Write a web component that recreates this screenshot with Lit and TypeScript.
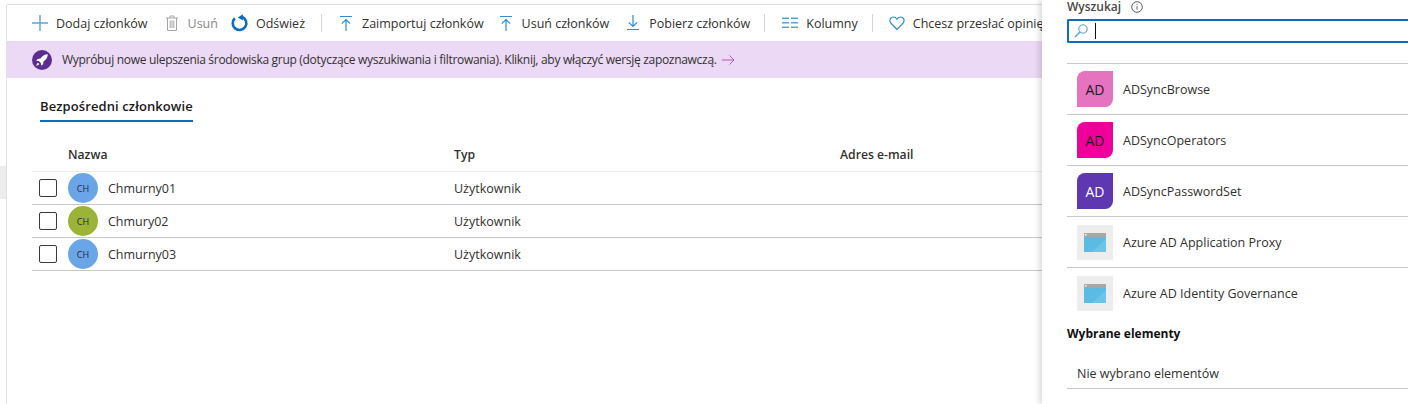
import { LitElement, html, css, svg } from "lit";
import { customElement } from "lit/decorators.js";

const icons: Record<string, unknown> = {
  plus: svg`<path d="M8 0v16M0 8h16" stroke="#5ba3d6" stroke-width="1.4" fill="none"/>`,
  trash: svg`<path d="M2 3h12M6 3V1h4v2M3.500 3v12.500h9V3M6.200 5.500v7.500M8 5.500v7.500M9.800 5.500v7.500" stroke="#a6a6a6" stroke-width="1" fill="none"/>`,
  refresh: svg`<path d="M2.800 3.300A6.800 6.800 0 1 0 9.800 1.800" stroke="#0f6cbd" stroke-width="2.600" fill="none"/><path d="M5.800 2.400 10.800 -0.800v6.400z" fill="#0f6cbd"/>`,
  up: svg`<path d="M2 1.500h12M8 16V4.500M3.800 8.700 8 4.500l4.200 4.200" stroke="#2f8fd0" stroke-width="1.200" fill="none"/>`,
  down: svg`<path d="M2 14.500h12M8 0v11.500M3.800 7.300 8 11.500l4.200-4.200" stroke="#2f8fd0" stroke-width="1.200" fill="none"/>`,
  columns: svg`<path d="M0 3.200h7M9 3.200h7M0 7.700h7M9 7.700h7M0 12.200h7M9 12.200h7" stroke="#5ba3d6" stroke-width="1.500" fill="none"/>`,
  heart: svg`<path d="M8 14.500 1.800 8C-.3 5 1.500 2 4.500 2 6 2 7.300 3 8 4.200 8.700 3 10 2 11.500 2c3 0 4.800 3 2.700 6z" stroke="#2f8fd0" stroke-width="1.200" fill="none"/>`,
};

const icon = (name: string) =>
  html`<svg class="icon" width="16" height="16" viewBox="0 0 16 16">${icons[name]}</svg>`;

const tools = [
  { icon: "plus", label: "Dodaj członków", gap: 0 },
  { icon: "trash", label: "Usuń", gap: 16, off: true },
  { icon: "refresh", label: "Odśwież", gap: 14 },
  { sep: true, gap: 16 },
  { icon: "up", label: "Zaimportuj członków", gap: 16 },
  { icon: "up", label: "Usuń członków", gap: 14 },
  { icon: "down", label: "Pobierz członków", gap: 16 },
  { sep: true, gap: 14 },
  { icon: "columns", label: "Kolumny", gap: 17 },
  { sep: true, gap: 14 },
  { icon: "heart", label: "Chcesz przesłać opinię?", gap: 16 },
];

const members = [
  { name: "Chmurny01", color: "#6aa5e8" },
  { name: "Chmury02", color: "#9bb437" },
  { name: "Chmurny03", color: "#6aa5e8" },
];

const groups = [
  { name: "ADSyncBrowse", color: "#e573bf", dark: true },
  { name: "ADSyncOperators", color: "#f0009a", dark: true },
  { name: "ADSyncPasswordSet", color: "#5f37b0", dark: false },
];

const apps = ["Azure AD Application Proxy", "Azure AD Identity Governance"];

@customElement("app-root")
export class AppRoot extends LitElement {
  static styles = css`
    :host {
      display: flex;
      width: 1408px;
      height: 404px;
      overflow: hidden;
      background: #fff;
      font-family: "Open Sans", "Noto Sans", sans-serif;
      font-size: 12.5px;
      color: #323130;
    }
    .rail {
      width: 6px;
      flex: none;
      border-right: 1px solid #e1e1e1;
      margin-top: 5px;
      padding-top: 161px;
    }
    .rail div {
      height: 33px;
      width: 6px;
      background: #ececec;
    }
    .main {
      flex: 1;
      min-width: 0;
      overflow: hidden;
      padding-top: 4px;
    }
    .toolbar {
      display: flex;
      align-items: center;
      height: 36px;
      border-top: 1px solid #dedede;
      padding-left: 25px;
      white-space: nowrap;
    }
    .tool {
      display: flex;
      align-items: center;
      flex: none;
      gap: 8px;
    }
    .tool.off { color: #8a8886; }
    .icon { flex: none; display: block; overflow: visible; }
    .sep {
      width: 1px;
      height: 18px;
      flex: none;
      background: #d6d6d6;
    }
    .banner {
      height: 37px;
      display: flex;
      align-items: center;
      gap: 10px;
      padding-left: 25px;
      background: #ecd9f5;
      white-space: nowrap;
      font-size: 12px;
      letter-spacing: -0.3px;
    }
    .arrow { margin-left: -6px; }
    .content { padding: 19px 0 0 25px; }
    .tab {
      display: inline-block;
      margin-left: 8px;
      padding: 0 0 4px;
      border-bottom: 2px solid #0f6cbd;
      font-weight: 600;
      font-size: 13px;
      letter-spacing: 0.1px;
      line-height: 19px;
      color: #1b1a19;
    }
    .table { margin-top: 22px; }
    .row {
      display: grid;
      grid-template-columns: 36px 386px 386px 1fr;
      align-items: center;
      height: 32px;
      border-bottom: 1px solid #c8c8c8;
    }
    .row.head {
      height: 21px;
      padding-bottom: 6px;
      border-bottom-color: #ececec;
      font-weight: 600;
      font-size: 12.2px;
    }
    .check {
      width: 16px;
      height: 16px;
      margin-left: 7px;
      border: 1px solid #3b3a39;
      border-radius: 2px;
      background: #fff;
    }
    .person { display: flex; align-items: center; gap: 10px; }
    .avatar {
      width: 30px;
      height: 30px;
      border-radius: 50%;
      display: flex;
      align-items: center;
      justify-content: center;
      font-size: 9px;
      color: #1f2a44;
      flex: none;
    }
    .panel {
      width: 366px;
      flex: none;
      box-sizing: border-box;
      padding-left: 25px;
      background: #fff;
      box-shadow: -3px 0 6px rgba(0, 0, 0, 0.14);
      position: relative;
    }
    .label {
      display: flex;
      align-items: center;
      gap: 10px;
      height: 14px;
      line-height: 14px;
      font-weight: 600;
      font-size: 12px;
      color: #4a4948;
    }
    .search {
      display: flex;
      align-items: center;
      box-sizing: border-box;
      height: 24px;
      margin-top: 5px;
      border: 2px solid #0f6cbd;
      border-right: none;
      border-radius: 2px 0 0 2px;
      padding-left: 4px;
      gap: 6px;
    }
    .caret { width: 1px; height: 16px; background: #111; }
    .list { margin-top: 20px; border-top: 1px solid #c8c8c8; }
    .item {
      display: flex;
      align-items: center;
      gap: 10px;
      height: 50px;
      padding-left: 10px;
      border-bottom: 1px solid #c8c8c8;
    }
    .item:last-child { border-bottom: none; height: 51px; }
    .badge {
      width: 36px;
      height: 36px;
      flex: none;
      display: flex;
      align-items: center;
      justify-content: center;
      border-radius: 8px 0 8px 0;
      font-size: 14px;
    }
    .app {
      width: 36px;
      height: 35px;
      flex: none;
      display: flex;
      align-items: center;
      justify-content: center;
      background: #ededed;
    }
    h3 {
      margin: 6px 0 0;
      font-size: 12px;
      line-height: 18px;
      font-weight: 700;
      color: #111;
    }
    .empty {
      display: flex;
      align-items: center;
      height: 30px;
      margin-top: 15px;
      padding-left: 10px;
      border-bottom: 1px solid #c8c8c8;
    }
  `;

  renderTool(t: (typeof tools)[number]) {
    if (t.sep) return html`<div class="sep" style="margin-left:${t.gap}px"></div>`;
    return html`<div class="tool ${t.off ? "off" : ""}" style="margin-left:${t.gap}px">
      ${icon(t.icon!)}${t.label}
    </div>`;
  }

  render() {
    return html`
      <div class="rail"><div></div></div>
      <div class="main">
        <div class="toolbar">${tools.map((t) => this.renderTool(t))}</div>
        <div class="banner">
          <svg width="20" height="20" viewBox="0 0 20 20">
            <circle cx="10" cy="10" r="10" fill="#5c2d91" />
            <path d="M15.800 4.200c-3.300.1-5.600 1.700-7.300 4.300l-2.900.4-1.400 2 2.600.2 2.100 2 .2 2.600 2-1.500.4-2.800c2.600-1.700 4.200-3.900 4.300-7.200z" fill="#fff" />
            <path d="M5.800 12.600 4 16l3.400-1.800z" fill="#fff" />
          </svg>
          <span>Wypróbuj nowe ulepszenia środowiska grup (dotyczące wyszukiwania i filtrowania). Kliknij, aby włączyć wersję zapoznawczą.</span>
          <svg class="arrow" width="14" height="12" viewBox="0 0 14 12"><path d="M1 6h12M8.500 1.500 13 6l-4.500 4.500" stroke="#a45cc4" fill="none" /></svg>
        </div>
        <div class="content">
          <div class="tab">Bezpośredni członkowie</div>
          <div class="table">
            <div class="row head"><span></span><span>Nazwa</span><span>Typ</span><span>Adres e-mail</span></div>
            ${members.map(
              (m) => html`<div class="row">
                <div class="check"></div>
                <div class="person">
                  <div class="avatar" style="background:${m.color}">CH</div>
                  ${m.name}
                </div>
                <span>Użytkownik</span>
                <span></span>
              </div>`
            )}
          </div>
        </div>
      </div>
      <div class="panel">
        <div class="label">
          Wyszukaj
          <svg width="12" height="12" viewBox="0 0 12 12"><circle cx="6" cy="6" r="5.300" stroke="#605e5c" fill="none" /><path d="M6 5.200v3.300M6 3.200v1" stroke="#605e5c" fill="none" /></svg>
        </div>
        <div class="search">
          <svg width="16" height="16" viewBox="0 0 16 16"><circle cx="10" cy="6" r="4.200" stroke="#4c9bd4" fill="none" /><path d="M7 9 2 14" stroke="#4c9bd4" stroke-width="1.300" /></svg>
          <div class="caret"></div>
        </div>
        <div class="list">
          ${groups.map(
            (g) => html`<div class="item">
              <div class="badge" style="background:${g.color};color:${g.dark ? "#1f1a1f" : "#fff"}">AD</div>
              ${g.name}
            </div>`
          )}
          ${apps.map(
            (a) => html`<div class="item">
              <div class="app">
                <svg width="22" height="19" viewBox="0 0 22 19">
                  <rect width="22" height="19" fill="#5bbbe3" />
                  <rect width="22" height="4" fill="#a8a8a8" />
                  <rect x="1" y="1" width="1.500" height="1.500" fill="#fff" />
                  <path d="M8 19 22 6v13z" fill="#6cc4e8" />
                </svg>
              </div>
              ${a}
            </div>`
          )}
        </div>
        <h3>Wybrane elementy</h3>
        <div class="empty">Nie wybrano elementów</div>
      </div>
    `;
  }
}
